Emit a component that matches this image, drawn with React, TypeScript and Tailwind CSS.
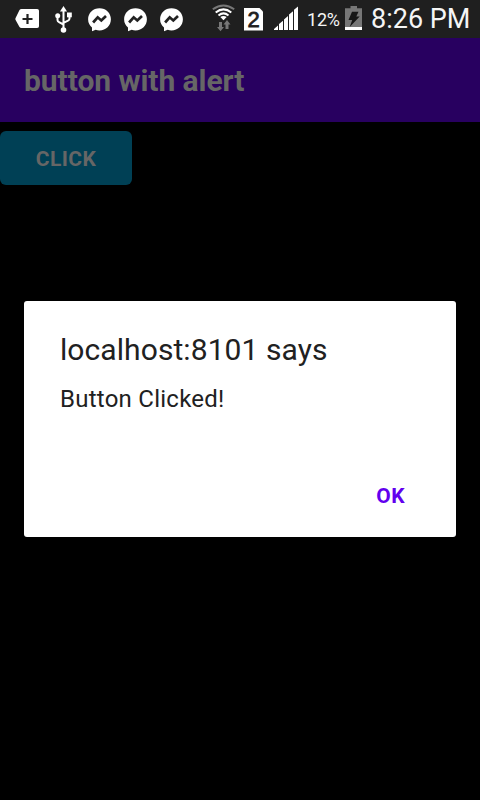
function BackspacePlus() {
  return (
    <svg className="h-[38px] w-6 shrink-0" viewBox="0 0 24 38">
      <path d="M6.500 9H22.200Q24 9 24 10.800V26.200Q24 28 22.200 28H6.500Q5.200 28 4.500 27L.6 20Q0 19 .6 18L4.500 10Q5.200 9 6.500 9Z" fill="#fff" />
      <path d="M12.500 14v10M7.500 19h10" stroke="#222" strokeWidth="2.200" />
    </svg>
  );
}

function Usb() {
  return (
    <svg className="h-[38px] w-[17px] shrink-0" viewBox="0 0 17 38" fill="none" stroke="#fff" strokeWidth="2">
      <path d="M8.500 10v18M2.500 16v4q0 1.500 1.500 2.200L8.500 24.500M14.500 15v3.500q0 1.500-1.500 2.200L8.500 22.800" />
      <path d="M8.500 6L12 11.500H5Z" fill="#fff" stroke="none" />
      <circle cx="2.700" cy="15.800" r="2.500" fill="#fff" stroke="none" />
      <rect x="12" y="12.500" width="4.800" height="4.800" fill="#fff" stroke="none" />
      <circle cx="8.500" cy="30" r="2.800" fill="#fff" stroke="none" />
    </svg>
  );
}

function Messenger() {
  return (
    <svg className="h-[38px] w-[23px] shrink-0" viewBox="0 0 23 38">
      <path d="M11.500 8.200C5 8.200 .1 13 .1 19.300q0 4.700 3.900 8.200v3.800l3.700-1.500q1.800.6 3.800.6c6.500 0 11.400-4.800 11.400-11.100S18 8.200 11.500 8.200Z" fill="#fff" />
      <path d="M5.100 22.500L9.700 17.300L13.300 20.400L18 16" fill="none" stroke="#222" strokeWidth="2.700" />
    </svg>
  );
}

function Wifi() {
  return (
    <svg className="h-[38px] w-[23px] shrink-0" viewBox="0 0 23 38" fill="none">
      <path d="M.8 9.300Q11.500 1.800 22.200 9.300" stroke="#777" strokeWidth="2" />
      <path d="M3.700 12.500Q11.500 6.300 19.300 12.500M6.500 15.400Q11.500 11.300 16.500 15.400" stroke="#fff" strokeWidth="2" />
      <path d="M8.300 17.100Q11.500 14.800 14.700 17.100L11.500 20.200Z" fill="#fff" />
      <path d="M7 22h3v5h2l-3.500 4.300L5 27h2ZM13.500 29v-4.500h-2L15 20l3.500 4.500h-2V29Z" fill="#777" />
    </svg>
  );
}

function Sim() {
  return (
    <div className="flex h-[23px] w-[19px] shrink-0 items-center justify-center bg-white font-['Liberation_Sans',sans-serif] text-[22px] leading-none text-[#1f1f1f] [-webkit-text-stroke:0.8px_#1f1f1f] [clip-path:polygon(0_0,79%_0,100%_17%,100%_100%,0_100%)]">
      <span className="mt-px">2</span>
    </div>
  );
}

function Signal() {
  return (
    <svg className="h-[38px] w-6 shrink-0" viewBox="0 0 24 38" fill="#fff">
      <path d="M0 30V29L4 25.500V30ZM5 30V24L9 20.700V30ZM10 30V19.500L14 16V30ZM15 30V14.500L19 11.300V30ZM20 30V9.800L24 6.500V30Z" />
    </svg>
  );
}

function Battery() {
  return (
    <svg className="h-[38px] w-[17px] shrink-0" viewBox="0 0 17 38">
      <path d="M5.500 6h6.500v2.200h5V30H0V8.200h5.500Z" fill="#777" />
      <path d="M0 27h17v3H0Z" fill="#fff" />
      <path d="M7 11.800h6.500l-2.200 4.700H14.700L4.700 27l2.500-7H3.500Z" fill="#161616" />
    </svg>
  );
}

export default function App() {
  return (
    <div className="flex h-[800px] w-[480px] flex-col overflow-hidden bg-black font-[Roboto,sans-serif]">
      <header className="flex h-[38px] shrink-0 items-center bg-[#1f1f1f] pl-[15px] text-[#f5f5f5]">
        <BackspacePlus />
        <div className="ml-4 flex"><Usb /></div>
        <div className="ml-4 flex gap-[13px]">
          <Messenger />
          <Messenger />
          <Messenger />
        </div>
        <div className="ml-[29px] flex items-center">
          <Wifi />
          <div className="ml-[9px]"><Sim /></div>
          <div className="ml-[11px]"><Signal /></div>
        </div>
        <span className="ml-[9px] w-[38px] shrink-0 pt-[2px] text-[18px] leading-none tracking-[-0.200px] whitespace-nowrap">12%</span>
        <Battery />
        <span className="ml-[9px] shrink-0 text-[27px] leading-none whitespace-nowrap">8:26 PM</span>
      </header>
      <div className="flex h-[84px] shrink-0 items-center bg-[#280060] pt-px pl-6">
        <h1 className="text-[30px] leading-none font-bold tracking-[-0.050px] whitespace-nowrap text-[#666]">button with alert</h1>
      </div>
      <main className="flex flex-col pt-[9px]">
        <button className="h-[54px] w-[132px] rounded-md bg-[#004055] pt-[3px] text-[21px] font-bold tracking-[0.400px] text-[#666]">CLICK</button>
        <section className="mx-6 mt-[116px] flex h-[236px] flex-col rounded-[3px] bg-white px-9 pt-[31px] text-[#212121]">
          <h2 className="text-[30px] leading-[36px] tracking-[0.080px] whitespace-nowrap">localhost:8101 says</h2>
          <p className="mt-[13px] text-[24px] leading-[36px] tracking-[0.250px] whitespace-nowrap">Button Clicked!</p>
          <button className="mt-[63px] mr-[15px] self-end text-[21px] leading-[32px] font-bold tracking-[0.500px] text-[#6200ee]">OK</button>
        </section>
      </main>
    </div>
  );
}
